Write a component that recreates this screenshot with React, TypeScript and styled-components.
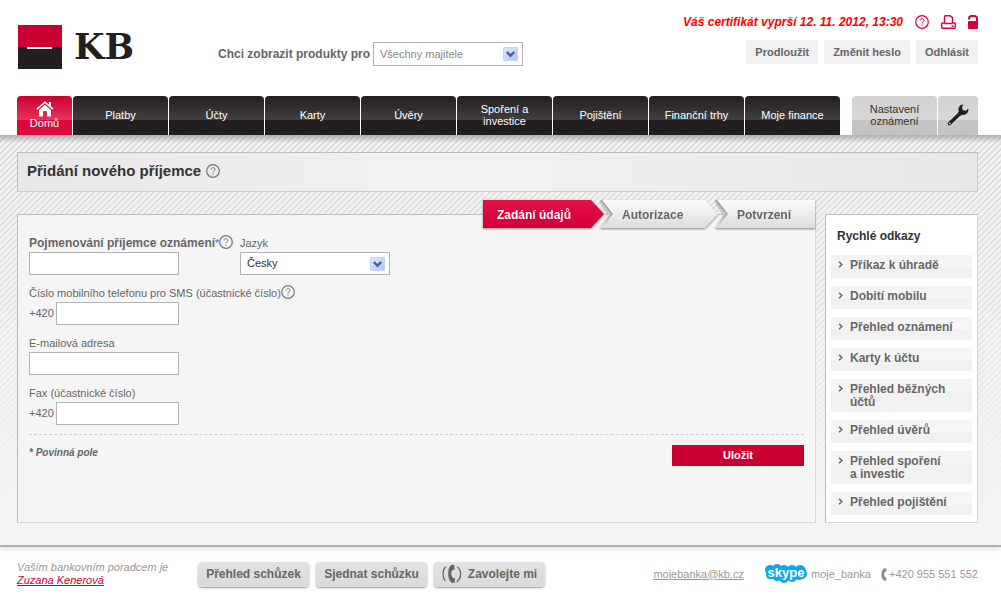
import React from 'react';
import styled, { createGlobalStyle, css } from 'styled-components';

const GlobalStyle = createGlobalStyle`
  *, *::before, *::after { box-sizing: border-box; }
  body {
    margin: 0;
    background: #fff;
    color: #666;
    font: 11px/13px "Liberation Sans", Arial, sans-serif;
  }
  button, input, select { font: inherit; color: inherit; }
  a { color: inherit; }
  ul, ol { margin: 0; padding: 0; list-style: none; }
`;

/* ---------- header ---------- */

const Header = styled.header`
  padding: 14px 23px 0 17px;
`;

const HeaderTop = styled.div`
  display: flex;
  align-items: flex-start;
  height: 82px;
`;

const Logo = styled.a`
  display: block;
  margin-top: 11px;
  width: 201px;
  height: 44px;
`;

const OwnerFilter = styled.div`
  display: flex;
  align-items: center;
  gap: 3px;
  margin-top: 28px;
  font-size: 12px;
  font-weight: bold;
`;

const SelectBox = styled.span`
  position: relative;
  display: block;
  width: 150px;
`;

const NativeSelect = styled.select<{ $muted?: boolean }>`
  display: block;
  appearance: none;
  width: 100%;
  height: ${p => (p.$muted ? 24 : 23)}px;
  margin: 0;
  padding: 0 24px 0 6px;
  border: 1px solid #b4b4b4;
  border-radius: 0;
  background: #fff;
  color: ${p => (p.$muted ? '#888' : '#333')};
  font-size: 11px;
  font-weight: normal;
`;

const SelectArrow = styled.span`
  position: absolute;
  top: 5px;
  right: 5px;
  display: flex;
  width: 15px;
  height: 14px;
  border-radius: 1px;
  border: 1px solid #c3d3fb;
  background: linear-gradient(135deg, #dde7fe, #b0c7fb);
  pointer-events: none;
`;

const Account = styled.div`
  margin-left: auto;
  display: flex;
  flex-direction: column;
  align-items: flex-end;
  gap: 10px;
`;

const AccountRow = styled.div<{ $gap: number }>`
  display: flex;
  align-items: center;
  gap: ${p => p.$gap}px;
`;

const CertNote = styled.em`
  color: #f00;
  font: italic bold 12px/16px "Liberation Sans", Arial, sans-serif;
`;

const IconButton = styled.button`
  display: flex;
  padding: 0;
  border: 0;
  background: none;
  color: #d4003c;
  cursor: pointer;
`;

const FlatButton = styled.button`
  height: 24px;
  padding: 0 9px;
  border: 0;
  background: #f1f1f1;
  color: #666;
  font-weight: bold;
`;

/* ---------- navigation ---------- */

const Nav = styled.nav`
  display: flex;
  gap: 1px;
`;

const tones = {
  dark: css`
    background: linear-gradient(#231f20, #413e3f) top / 100% 24px no-repeat, #231f20;
    color: #fff;
  `,
  red: css`
    background: linear-gradient(#cc0030, #e5335f) top / 100% 24px no-repeat, #dc0a3c;
    color: #fff;
  `,
  grey: css`
    background: linear-gradient(#d3d2d2, #d9d8d8) top / 100% 24px no-repeat, linear-gradient(#cbcaca, #c3c2c2);
    color: #333;
  `,
};

const Tab = styled.a<{ $tone: keyof typeof tones; $width?: number; $apart?: boolean }>`
  flex: ${p => (p.$width ? `0 0 ${p.$width}px` : '1 1 0')};
  display: flex;
  flex-direction: column;
  align-items: center;
  justify-content: center;
  height: 39px;
  margin-left: ${p => (p.$apart ? 11 : 0)}px;
  padding: 0 ${p => (p.$width ? 0 : 14)}px 1px;
  border-radius: 4px 4px 0 0;
  text-align: center;
  text-decoration: none;
  line-height: 12px;
  ${p => tones[p.$tone]}
`;

/* ---------- main area ---------- */

const Main = styled.main`
  padding: 17px 23px 22px 17px;
  border-bottom: 2px solid #b0b0b0;
  box-shadow: 0 2px 5px #ddd;
  background:
    linear-gradient(rgba(120, 120, 120, 0.5), rgba(160, 160, 160, 0)) top / 100% 8px no-repeat,
    linear-gradient(rgba(243, 243, 243, 0), #f3f3f3 380px),
    linear-gradient(135deg, #dedede 25%, #f4f4f4 25% 50%, #dedede 50% 75%, #f4f4f4 75%) 0 0 / 6px 6px;
`;

const TitleBar = styled.div`
  display: flex;
  align-items: center;
  gap: 5px;
  height: 40px;
  padding: 0 9px 2px;
  border: 1px solid #ccc;
  border-top-color: #bbb;
  border-left-color: #bbb;
  background: linear-gradient(90deg, #e8e8e8, #f2f2f2 45%, #e8e8e8);
`;

const Title = styled.h1`
  margin: 0;
  color: #333;
  font-size: 15px;
  line-height: 18px;
`;

const Columns = styled.div`
  display: flex;
  gap: 9px;
  margin-top: 22px;
`;

const Panel = styled.section`
  position: relative;
  flex: 1;
  padding: 20px 11px;
  border: 1px solid #d5d5d5;
  border-top-color: #bbb;
  border-left-color: #bbb;
  background: #f5f5f5;
`;

const Steps = styled.ol`
  position: absolute;
  top: -15px;
  right: 0;
  display: flex;
  filter: drop-shadow(0 1px 1px #888);
`;

const Step = styled.li<{ $kind: 'current' | 'middle' | 'last' }>`
  position: relative;
  height: 28px;
  padding-left: ${p => (p.$kind === 'current' ? 14 : 22)}px;
  width: ${p => ({ current: 121, middle: 118, last: 100 })[p.$kind]}px;
  margin-left: ${p => ({ current: 0, middle: -4, last: -3 })[p.$kind]}px;
  color: ${p => (p.$kind === 'current' ? '#fff' : '#666')};
  background: ${p =>
    p.$kind === 'current' ? 'linear-gradient(#e60f46, #d2003a)' : 'linear-gradient(#fcfcfc, #dcdcdc)'};
  clip-path: ${p =>
    ({
      current: 'polygon(0 0, 108px 0, 100% 50%, 108px 100%, 0 100%)',
      middle: 'polygon(0 0, 105px 0, 100% 50%, 105px 100%, 0 100%, 9px 50%)',
      last: 'polygon(0 0, 100% 0, 100% 100%, 0 100%, 9px 50%)',
    })[p.$kind]};
  font: bold 12px/31px "Liberation Sans", Arial, sans-serif;

  &::before {
    content: ${p => (p.$kind === 'current' ? 'none' : '""')};
    position: absolute;
    inset: 0 auto 0 0;
    width: 13px;
    background: linear-gradient(#999, #b0b0b0 60%, #e4e4e4);
    clip-path: polygon(0 0, 2px 0, 100% 50%, 2px 100%, 0 100%, 10px 50%);
  }
`;

const Fields = styled.div`
  display: grid;
  row-gap: 10px;
  padding-bottom: 9px;
  border-bottom: 1px dashed #ccc;
`;

const FieldRow = styled.div`
  display: flex;
  gap: 10px;
`;

const Field = styled.div<{ $width?: number }>`
  width: ${p => (p.$width ? `${p.$width}px` : 'auto')};
`;

const LabelLine = styled.div`
  display: flex;
  align-items: flex-end;
  height: 17px;
  white-space: nowrap;
`;

const Label = styled.label<{ $strong?: boolean }>`
  padding-bottom: 2px;
  font-size: ${p => (p.$strong ? 12 : 11)}px;
  font-weight: ${p => (p.$strong ? 'bold' : 'normal')};
`;

const HelpButton = styled(IconButton)<{ $raised?: boolean }>`
  align-self: ${p => (p.$raised ? 'flex-start' : 'center')};
  color: #777;
`;

const Required = styled.span`
  color: #4a7ab5;
  font-size: 11px;
  font-weight: normal;
`;

const InputLine = styled.div`
  display: flex;
  align-items: center;
  gap: 2px;
  width: 150px;
`;

const TextInput = styled.input`
  flex: 1;
  min-width: 0;
  height: 23px;
  padding: 0 6px;
  border: 1px solid #b4b4b4;
  background: #fff;
`;

const FormFooter = styled.div`
  display: flex;
  justify-content: space-between;
  align-items: flex-start;
  padding-top: 10px;
`;

const Note = styled.em`
  font-size: 10px;
  line-height: 16px;
  font-weight: bold;
`;

const SaveButton = styled.button`
  width: 132px;
  height: 21px;
  padding: 0;
  border: 0;
  background: #cc0033;
  color: #fff;
  font-weight: bold;
`;

const Sidebar = styled.aside`
  flex: 0 0 153px;
  padding: 13px 5px 7px;
  border: 1px solid #d5d5d5;
  border-top-color: #bbb;
  border-left-color: #bbb;
  background: #fff;
`;

const SidebarTitle = styled.h2`
  margin: 0 0 11px 6px;
  color: #333;
  font-size: 12px;
  line-height: 16px;
`;

const QuickList = styled.ul`
  display: grid;
  gap: 8px;
`;

const QuickLink = styled.a`
  display: flex;
  min-height: 23px;
  gap: 6px;
  padding: 4px 4px 3px 7px;
  border-radius: 3px 0 0 0;
  background: linear-gradient(#f3f3f3, #f7f7f7) top / 100% 12px no-repeat, #f1f1f1;
  color: #666;
  font: bold 12px/13px "Liberation Sans", Arial, sans-serif;
  text-decoration: none;

  svg { flex: none; margin-top: 2px; }
`;

/* ---------- footer ---------- */

const Footer = styled.footer`
  display: flex;
  align-items: center;
  padding: 14px 23px 10px 17px;
  color: #999;
`;

const Advisor = styled.p`
  flex: 0 0 181px;
  margin: 0;
  font-style: italic;

  a { color: #c03; }
`;

const FooterButtons = styled.div`
  display: flex;
  gap: 7px;
`;

const RaisedButton = styled.button`
  display: flex;
  align-items: center;
  justify-content: center;
  gap: 6px;
  width: 111px;
  height: 25px;
  padding: 0;
  border: 0;
  border-radius: 4px;
  background: linear-gradient(#e2e2e2, #dadada);
  box-shadow: 0 1px 2px #999;
  color: #666;
  font-size: 12px;
  font-weight: bold;
  white-space: nowrap;
`;

const Contacts = styled.address`
  display: flex;
  align-items: center;
  margin-left: auto;
  font-style: normal;
  white-space: nowrap;
`;

const Contact = styled.span<{ $before: number; $gap: number }>`
  display: flex;
  align-items: center;
  gap: ${p => p.$gap}px;
  margin-left: ${p => p.$before}px;
`;

/* ---------- drawings ---------- */

const HelpIcon = () => (
  <svg width="14" height="14" viewBox="0 0 14 14" fill="none" stroke="currentColor" aria-hidden="true">
    <circle cx="7" cy="7" r="6.3" strokeWidth="1.2" />
    <path d="M5 5.6c0-2.6 4-2.6 4-.2C9 6.8 7 6.8 7 8.5M7 9.6v1.2" strokeWidth="1" />
  </svg>
);

const PrinterIcon = () => (
  <svg width="15" height="14" viewBox="0 0 15 14" fill="none" stroke="currentColor" strokeWidth="1.4" aria-hidden="true">
    <path d="M3.500 8V1.700q0-1 1-1h4.500l2.500 2V8" />
    <path d="M3.500 8H1.700q-1 0-1 1v3.300q0 1 1 1h11.600q1 0 1-1V9q0-1-1-1h-1.800" />
    <path d="M3.500 8.500h8M10.500 11h2" />
  </svg>
);

const LockIcon = () => (
  <svg width="10" height="14" viewBox="0 0 10 14" aria-hidden="true">
    <path d="M1 4.500V3.500Q1 1 3.800 1h2.400Q9 1 9 3.500V6" fill="none" stroke="currentColor" strokeWidth="2" />
    <rect y="6" width="10" height="8" rx="1" fill="currentColor" />
  </svg>
);

const HomeIcon = () => (
  <svg width="18" height="16" viewBox="0 0 18 16" aria-hidden="true">
    <path d="M1 8.200 9 1.200l8 7" fill="none" stroke="#fff" strokeWidth="1.600" />
    <path d="M12.800 1h2.200v5l-2.200-2z" fill="#fff" />
    <path d="M3 9l6-5.200L15 9v6.500h-4V11q0-1-1-1H8q-1 0-1 1v4.500H3z" fill="#fff" />
  </svg>
);

const WrenchIcon = () => (
  <svg width="24" height="24" viewBox="0 0 24 24" aria-hidden="true">
    <path d="M3.500 20.500 14 10.500" stroke="#231f20" strokeWidth="3.600" strokeLinecap="round" />
    <path
      d="M17.500 1.500C13.500 1.500 11.500 5 12.800 8.300l-1 2 2.500 2.500 2.200-1c3.500.6 6.500-2.300 5.800-6.300l-2.300 2.300-3.200-.6-.9-2.900z"
      fill="#231f20"
    />
    <circle cx="3.800" cy="20.300" r=".9" fill="#d2d1d1" />
  </svg>
);

const ChevronIcon = () => (
  <svg width="6" height="7" viewBox="0 0 6 7" aria-hidden="true">
    <path d="M1 .8 3.800 3.500 1 6.200" fill="none" stroke="#666" strokeWidth="1.500" />
  </svg>
);

const HandsetIcon = () => (
  <svg width="20" height="20" viewBox="0 0 20 20" aria-hidden="true">
    <path
      d="M9.500 1C5 3 5 16.500 10 19l2.700-.6.4-4-2.400-.7C9 11.500 9 8.500 10 6.300l2.500-.5V1.500L10.500.6z"
      fill="#666"
    />
    <path d="M3.800 2.800C.2 6 .2 13 3.200 16.800M15.200 2.800c4.600 3.500 4.600 11-.5 15.200" fill="none" stroke="#666" strokeWidth="1.300" />
  </svg>
);

const ReceiverIcon = () => (
  <svg width="6" height="13" viewBox="0 0 6 13" aria-hidden="true">
    <path d="M3.500.3C-.5 2-.5 11 3.500 12.700l2-.4-.2-2.800-1.600-.3C3 7.500 3 5.500 3.700 3.800l1.600-.3L5.500.7z" fill="#888" />
  </svg>
);

const SkypeLogo = () => (
  <svg width="42" height="20" viewBox="0 0 42 20" role="img" aria-label="Skype">
    <g fill="#12a5e8">
      <circle cx="5" cy="6" r="5" />
      <circle cx="12" cy="5" r="5" />
      <circle cx="19" cy="6" r="5" />
      <circle cx="27" cy="6" r="5" />
      <circle cx="35" cy="7" r="6" />
      <circle cx="37" cy="10" r="5" />
      <circle cx="5" cy="11" r="4" />
      <circle cx="12" cy="13" r="4" />
      <circle cx="19" cy="14" r="5" />
      <circle cx="27" cy="13" r="5" />
      <circle cx="34" cy="12" r="4" />
      <rect x="5" y="4" width="31" height="11" />
    </g>
    <text
      x="21"
      y="13"
      textAnchor="middle"
      fill="#fff"
      fontFamily="Liberation Sans, Arial, sans-serif"
      fontWeight="bold"
      fontSize="13"
    >
      skype
    </text>
  </svg>
);

const KbLogo = () => (
  <svg width="130" height="44" viewBox="0 0 130 44" role="img" aria-label="KB">
    <rect x="1" width="44" height="22" fill="#cc0033" />
    <rect x="1" y="22" width="44" height="22" fill="#231f20" />
    <rect x="10" y="22" width="25" height="2" fill="#fff" />
    <text x="57" y="34" fill="#231f20" fontFamily="DejaVu Serif, serif" fontWeight="bold" fontSize="35">
      KB
    </text>
  </svg>
);

const Select = ({ id, options, muted }: { id: string; options: string[]; muted?: boolean }) => (
  <SelectBox>
    <NativeSelect id={id} $muted={muted}>
      {options.map(o => (
        <option key={o}>{o}</option>
      ))}
    </NativeSelect>
    <SelectArrow>
      <svg width="13" height="12" viewBox="0 0 13 12" aria-hidden="true">
        <path d="M2.800 4 6.500 7.700 10.200 4" fill="none" stroke="#4d6185" strokeWidth="2.400" />
      </svg>
    </SelectArrow>
  </SelectBox>
);

const Help = ({ raised }: { raised?: boolean }) => (
  <HelpButton type="button" aria-label="Nápověda" $raised={raised}>
    <HelpIcon />
  </HelpButton>
);

/* ---------- page ---------- */

const tabs = ['Platby', 'Účty', 'Karty', 'Úvěry', 'Spoření a investice', 'Pojištění', 'Finanční trhy', 'Moje finance'];

const quickLinks = [
  'Příkaz k úhradě',
  'Dobití mobilu',
  'Přehled oznámení',
  'Karty k účtu',
  'Přehled běžných účtů',
  'Přehled úvěrů',
  'Přehled spoření a\u00a0investic',
  'Přehled pojištění',
];

export default function App() {
  return (
    <>
      <GlobalStyle />
      <Header>
        <HeaderTop>
          <Logo href="#">
            <KbLogo />
          </Logo>
          <OwnerFilter>
            <label htmlFor="owner">Chci zobrazit produkty pro</label>
            <Select id="owner" options={['Všechny majitele']} muted />
          </OwnerFilter>
          <Account>
            <AccountRow $gap={12}>
              <CertNote>Váš certifikát vyprší 12. 11. 2012, 13:30</CertNote>
              <IconButton type="button" aria-label="Nápověda">
                <HelpIcon />
              </IconButton>
              <IconButton type="button" aria-label="Tisk">
                <PrinterIcon />
              </IconButton>
              <IconButton type="button" aria-label="Zabezpečení">
                <LockIcon />
              </IconButton>
            </AccountRow>
            <AccountRow $gap={6}>
              <FlatButton type="button">Prodloužit</FlatButton>
              <FlatButton type="button">Změnit heslo</FlatButton>
              <FlatButton type="button">Odhlásit</FlatButton>
            </AccountRow>
          </Account>
        </HeaderTop>
        <Nav>
          <Tab href="#" $tone="red" $width={55}>
            <HomeIcon />
            Domů
          </Tab>
          {tabs.map(t => (
            <Tab key={t} href="#" $tone="dark">
              {t}
            </Tab>
          ))}
          <Tab href="#" $tone="grey" $width={85} $apart>
            Nastavení oznámení
          </Tab>
          <Tab href="#" $tone="grey" $width={40} aria-label="Nastavení">
            <WrenchIcon />
          </Tab>
        </Nav>
      </Header>

      <Main>
        <TitleBar>
          <Title>Přidání nového příjemce</Title>
          <Help />
        </TitleBar>
        <Columns>
          <Panel>
            <Steps>
              <Step $kind="current">Zadání údajů</Step>
              <Step $kind="middle">Autorizace</Step>
              <Step $kind="last">Potvrzení</Step>
            </Steps>
            <form onSubmit={e => e.preventDefault()}>
              <Fields>
                <FieldRow>
                  <Field $width={201}>
                    <LabelLine>
                      <Label htmlFor="name" $strong>
                        Pojmenování příjemce oznámení<Required>*</Required>
                      </Label>
                      <Help raised />
                    </LabelLine>
                    <InputLine>
                      <TextInput id="name" required />
                    </InputLine>
                  </Field>
                  <Field>
                    <LabelLine>
                      <Label htmlFor="language">Jazyk</Label>
                    </LabelLine>
                    <Select id="language" options={['Česky']} />
                  </Field>
                </FieldRow>
                <Field>
                  <LabelLine>
                    <Label htmlFor="mobile">Číslo mobilního telefonu pro SMS (účastnické číslo)</Label>
                    <Help raised />
                  </LabelLine>
                  <InputLine>
                    <span>+420</span>
                    <TextInput id="mobile" type="tel" />
                  </InputLine>
                </Field>
                <Field>
                  <LabelLine>
                    <Label htmlFor="email">E-mailová adresa</Label>
                  </LabelLine>
                  <InputLine>
                    <TextInput id="email" type="email" />
                  </InputLine>
                </Field>
                <Field>
                  <LabelLine>
                    <Label htmlFor="fax">Fax (účastnické číslo)</Label>
                  </LabelLine>
                  <InputLine>
                    <span>+420</span>
                    <TextInput id="fax" type="tel" />
                  </InputLine>
                </Field>
              </Fields>
              <FormFooter>
                <Note>* Povinná pole</Note>
                <SaveButton type="submit">Uložit</SaveButton>
              </FormFooter>
            </form>
          </Panel>
          <Sidebar>
            <SidebarTitle>Rychlé odkazy</SidebarTitle>
            <QuickList>
              {quickLinks.map(l => (
                <li key={l}>
                  <QuickLink href="#">
                    <ChevronIcon />
                    <span>{l}</span>
                  </QuickLink>
                </li>
              ))}
            </QuickList>
          </Sidebar>
        </Columns>
      </Main>

      <Footer>
        <Advisor>
          Vaším bankovním poradcem je
          <br />
          <a href="#">Zuzana Kenerová</a>
        </Advisor>
        <FooterButtons>
          <RaisedButton type="button">Přehled schůzek</RaisedButton>
          <RaisedButton type="button">Sjednat schůzku</RaisedButton>
          <RaisedButton type="button">
            <HandsetIcon />
            Zavolejte mi
          </RaisedButton>
        </FooterButtons>
        <Contacts>
          <a href="mailto:mojebanka@kb.cz">mojebanka@kb.cz</a>
          <Contact $before={21} $gap={4}>
            <SkypeLogo />
            moje_banka
          </Contact>
          <Contact $before={10} $gap={2}>
            <ReceiverIcon />
            +420 955 551 552
          </Contact>
        </Contacts>
      </Footer>
    </>
  );
}
